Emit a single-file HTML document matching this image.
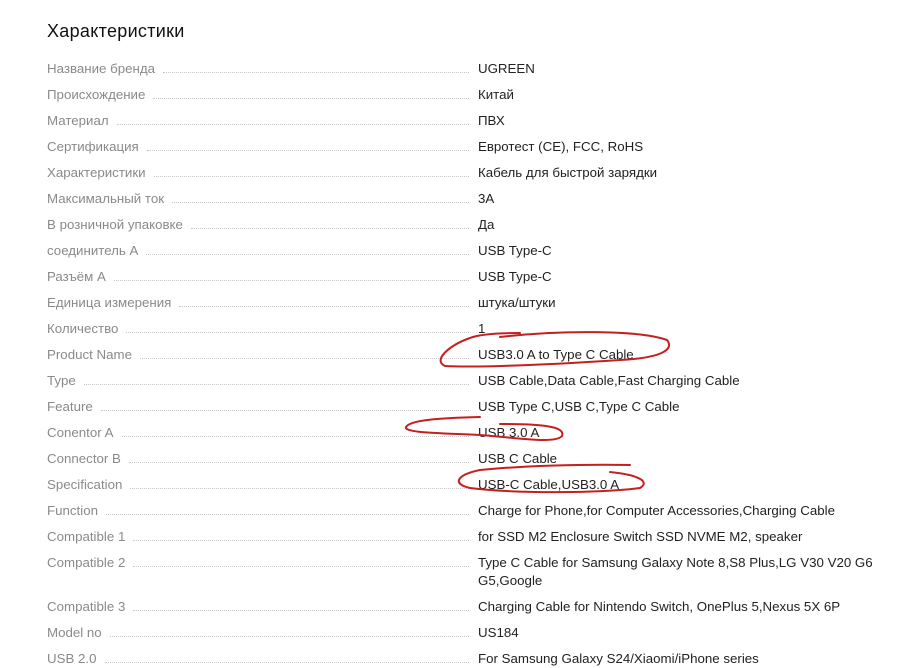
<!DOCTYPE html>
<html><head><meta charset="utf-8"><style>
body{margin:0;background:#fff;width:914px;height:665px;overflow:hidden;font-family:"Liberation Sans",sans-serif;position:relative}
h2{position:absolute;left:47px;top:21px;margin:0;font-size:18px;font-weight:normal;color:#111;letter-spacing:0.3px}
.r{position:absolute;left:47px;width:835px;font-size:13.3px;line-height:18px;display:flex}
.l{width:424px;color:#8a8a8a;display:flex;align-items:baseline}
.l span{white-space:nowrap}
.l i{flex:1;border-bottom:1px dotted #c8c8c8;margin:0 1px 0 8px;height:12px}
.v{width:405px;color:#222;margin-left:8px}
svg{position:absolute;left:0;top:0}
</style></head><body>
<h2>Характеристики</h2>
<div class="r" style="top:60px"><div class="l"><span>Название бренда</span><i></i></div><div class="v">UGREEN</div></div>
<div class="r" style="top:86px"><div class="l"><span>Происхождение</span><i></i></div><div class="v">Китай</div></div>
<div class="r" style="top:112px"><div class="l"><span>Материал</span><i></i></div><div class="v">ПВХ</div></div>
<div class="r" style="top:138px"><div class="l"><span>Сертификация</span><i></i></div><div class="v">Евротест (CE), FCC, RoHS</div></div>
<div class="r" style="top:164px"><div class="l"><span>Характеристики</span><i></i></div><div class="v">Кабель для быстрой зарядки</div></div>
<div class="r" style="top:190px"><div class="l"><span>Максимальный ток</span><i></i></div><div class="v">3A</div></div>
<div class="r" style="top:216px"><div class="l"><span>В розничной упаковке</span><i></i></div><div class="v">Да</div></div>
<div class="r" style="top:242px"><div class="l"><span>соединитель А</span><i></i></div><div class="v">USB Type-C</div></div>
<div class="r" style="top:268px"><div class="l"><span>Разъём А</span><i></i></div><div class="v">USB Type-C</div></div>
<div class="r" style="top:294px"><div class="l"><span>Единица измерения</span><i></i></div><div class="v">штука/штуки</div></div>
<div class="r" style="top:320px"><div class="l"><span>Количество</span><i></i></div><div class="v">1</div></div>
<div class="r" style="top:346px"><div class="l"><span>Product Name</span><i></i></div><div class="v">USB3.0 A to Type C Cable</div></div>
<div class="r" style="top:372px"><div class="l"><span>Type</span><i></i></div><div class="v">USB Cable,Data Cable,Fast Charging Cable</div></div>
<div class="r" style="top:398px"><div class="l"><span>Feature</span><i></i></div><div class="v">USB Type C,USB C,Type C Cable</div></div>
<div class="r" style="top:424px"><div class="l"><span>Conentor A</span><i></i></div><div class="v">USB 3.0 A</div></div>
<div class="r" style="top:450px"><div class="l"><span>Connector B</span><i></i></div><div class="v">USB C Cable</div></div>
<div class="r" style="top:476px"><div class="l"><span>Specification</span><i></i></div><div class="v">USB-C Cable,USB3.0 A</div></div>
<div class="r" style="top:502px"><div class="l"><span>Function</span><i></i></div><div class="v">Charge for Phone,for Computer Accessories,Charging Cable</div></div>
<div class="r" style="top:528px"><div class="l"><span>Compatible 1</span><i></i></div><div class="v">for SSD M2 Enclosure Switch SSD NVME M2, speaker</div></div>
<div class="r" style="top:554px"><div class="l"><span>Compatible 2</span><i></i></div><div class="v">Type C Cable for Samsung Galaxy Note 8,S8 Plus,LG V30 V20 G6 G5,Google</div></div>
<div class="r" style="top:598px"><div class="l"><span>Compatible 3</span><i></i></div><div class="v">Charging Cable for Nintendo Switch, OnePlus 5,Nexus 5X 6P</div></div>
<div class="r" style="top:624px"><div class="l"><span>Model no</span><i></i></div><div class="v">US184</div></div>
<div class="r" style="top:650px"><div class="l"><span>USB 2.0</span><i></i></div><div class="v">For Samsung Galaxy S24/Xiaomi/iPhone series</div></div>
<svg width="914" height="665" fill="none" stroke="#c42020" stroke-width="2" stroke-linecap="round">
<path d="M500 337 C560 330 640 330 667 340 C675 350 660 358 620 360 C560 364 480 368 445 366 C432 360 450 345 470 338 C480 334 500 333 520 333"/>
<path d="M480 417 C440 418 410 420 406 427 C404 433 440 433 480 435 C520 438 555 444 562 436 C566 426 540 424 500 424"/>
<path d="M630 465 C580 464 520 466 480 470 C456 475 452 484 470 488 C520 494 600 493 640 488 C650 482 640 475 610 472"/>
</svg>
</body></html>
